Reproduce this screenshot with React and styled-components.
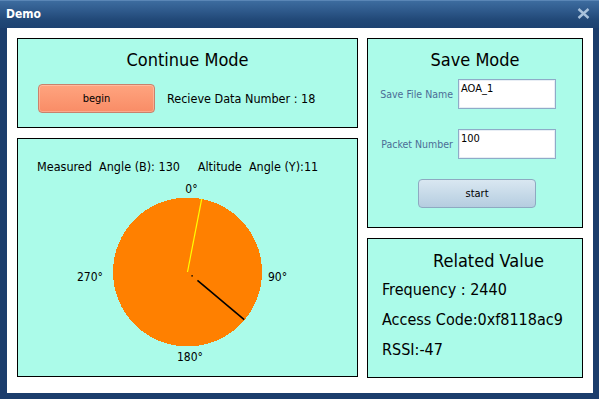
import React from "react";
import styled, { createGlobalStyle } from "styled-components";

const GlobalStyle = createGlobalStyle`
  html, body {
    margin: 0;
    padding: 0;
    width: 599px;
    height: 399px;
    overflow: hidden;
  }
  * {
    box-sizing: border-box;
  }
`;

const FONT = `"DejaVu Sans Condensed", "DejaVu Sans", Tahoma, sans-serif`;
const PANEL_BG = "#abfbe9";

const toXY = (cx, cy, r, deg) => {
  const rad = (deg * Math.PI) / 180;
  return [cx + r * Math.sin(rad), cy - r * Math.cos(rad)];
};

const AnglePie = ({ measured, altitude }) => {
  const cx = 169.5;
  const cy = 96;
  const r = 74.5;
  const [yx, yy] = toXY(cx, cy, r, altitude);
  const [bx1, by1] = toXY(cx, cy, 13, measured);
  const [bx2, by2] = toXY(cx, cy, 74, measured);
  const [dx, dy] = toXY(cx, cy, 6, measured);
  return (
    <ChartSvg viewBox="0 0 339 200" width="339" height="200">
      <circle cx={cx} cy={cy} r={r} fill="#ff8000" shapeRendering="crispEdges" />
      <line x1={cx} y1={cy} x2={yx} y2={yy} stroke="#ffff00" strokeWidth="1.2" />
      <line x1={bx1} y1={by1} x2={bx2} y2={by2} stroke="#000" strokeWidth="1.6" />
      <rect x={dx - 0.7} y={dy - 0.7} width="1.4" height="1.4" fill="#000" />
      <AxisText x="173.5" y="17" textAnchor="middle">0°</AxisText>
      <AxisText x="250" y="105">90°</AxisText>
      <AxisText x="172" y="185" textAnchor="middle">180°</AxisText>
      <AxisText x="85" y="105" textAnchor="end">270°</AxisText>
    </ChartSvg>
  );
};

const CloseIcon = () => (
  <svg width="13" height="11" viewBox="0 0 13 11">
    <path
      d="M1.5 1 L11.5 10 M11.5 1 L1.5 10"
      stroke="#a9c2dc"
      strokeWidth="2.4"
      strokeLinecap="butt"
    />
  </svg>
);

const App = () => {
  return (
    <>
      <GlobalStyle />
      <Window>
        <TitleBar>
          <TitleText>Demo</TitleText>
          <CloseButton>
            <CloseIcon />
          </CloseButton>
        </TitleBar>
        <Body>
          <Column>
            <Panel height={90}>
              <PanelTitle>Continue Mode</PanelTitle>
              <ContinueRow>
                <BeginButton>begin</BeginButton>
                <PlainText>Recieve Data Number : 18</PlainText>
              </ContinueRow>
            </Panel>
            <Panel height={239}>
              <AngleHeader>
                Measured&nbsp; Angle (B): 130&nbsp;&nbsp;&nbsp;&nbsp; Altitude&nbsp;
                Angle (Y):11
              </AngleHeader>
              <AnglePie measured={130} altitude={11} />
            </Panel>
          </Column>
          <Column width={216}>
            <Panel height={190}>
              <PanelTitle>Save Mode</PanelTitle>
              <FieldGrid>
                <FieldLabel>Save File Name</FieldLabel>
                <FieldInput>AOA_1</FieldInput>
                <FieldLabel>Packet Number</FieldLabel>
                <FieldInput>100</FieldInput>
              </FieldGrid>
              <StartButton>start</StartButton>
            </Panel>
            <Panel height={140}>
              <RelatedTitle>Related Value</RelatedTitle>
              <ValueLine>Frequency : 2440</ValueLine>
              <ValueLine>Access Code:0xf8118ac9</ValueLine>
              <ValueLine>RSSI:-47</ValueLine>
            </Panel>
          </Column>
        </Body>
      </Window>
    </>
  );
};

export default App;

const Window = styled.div`
  width: 599px;
  height: 399px;
  display: flex;
  flex-direction: column;
  background: #1b3d6c;
  font-family: ${FONT};
  color: #000;
`;

const TitleBar = styled.div`
  height: 28px;
  flex-shrink: 0;
  display: flex;
  align-items: center;
  justify-content: space-between;
  padding: 0 9px 2px 6px;
  background: linear-gradient(#3d6c9f 0%, #2f5a8c 35%, #214877 70%, #1d4271 100%);
  border-top: 1px solid #5a86b6;
`;

const TitleText = styled.div`
  color: #fff;
  font-weight: bold;
  font-size: 12px;
  font-family: ${FONT};
`;

const CloseButton = styled.div`
  display: flex;
  align-items: center;
`;

const Body = styled.div`
  flex: 1;
  margin: 0 6px 6px 7px;
  background: #fff;
  display: flex;
  gap: 9px;
  padding: 10px 10px 15px 10px;
`;

const Column = styled.div`
  display: flex;
  flex-direction: column;
  gap: 10px;
  width: ${({ width }) => (width ? `${width}px` : "341px")};
`;

const Panel = styled.div`
  height: ${({ height }) => height}px;
  background: ${PANEL_BG};
  border: 1px solid #000;
  display: flex;
  flex-direction: column;
`;

const PanelTitle = styled.div`
  font-size: 18px;
  text-align: center;
  margin-top: 10px;
  line-height: 22px;
`;

const ContinueRow = styled.div`
  display: flex;
  align-items: center;
  gap: 12px;
  margin-top: 13px;
  padding-left: 20px;
`;

const BeginButton = styled.div`
  width: 117px;
  height: 29px;
  border: 1px solid #c8826c;
  border-radius: 4px;
  background: linear-gradient(#ffa47f, #f98c66);
  display: flex;
  align-items: center;
  justify-content: center;
  font-size: 11px;
  box-shadow: inset 0 0 0 1px rgba(255, 255, 255, 0.25);
`;

const PlainText = styled.div`
  font-size: 12.5px;
`;

const AngleHeader = styled.div`
  font-size: 12.5px;
  padding: 20px 0 0 19px;
  line-height: 16px;
  height: 37px;
  white-space: nowrap;
`;

const ChartSvg = styled.svg`
  display: block;
`;

const AxisText = styled.text`
  font-family: ${FONT};
  font-size: 12px;
  fill: #000;
`;

const FieldGrid = styled.div`
  display: grid;
  grid-template-columns: 1fr 98px;
  column-gap: 5px;
  row-gap: 20px;
  align-items: center;
  margin-top: 8px;
  padding-right: 26px;
`;

const FieldLabel = styled.div`
  font-size: 10.5px;
  color: #4b6d96;
  text-align: right;
  white-space: nowrap;
`;

const FieldInput = styled.div`
  height: 30px;
  background: #fff;
  border: 1px solid #8fabc8;
  box-shadow: inset 0 0 0 1px #e8eef5;
  font-size: 11px;
  padding: 2px 0 0 2px;
`;

const StartButton = styled.div`
  align-self: center;
  width: 118px;
  height: 29px;
  margin: 20px 0 0 4px;
  border: 1px solid #8ea9c1;
  border-radius: 4px;
  background: linear-gradient(#d9e7f1, #b5cde0);
  display: flex;
  align-items: center;
  justify-content: center;
  font-size: 11px;
`;

const RelatedTitle = styled.div`
  font-size: 18px;
  margin: 11px 0 3px 65px;
  line-height: 22px;
`;

const ValueLine = styled.div`
  font-size: 16px;
  line-height: 30px;
  padding-left: 14px;
`;
